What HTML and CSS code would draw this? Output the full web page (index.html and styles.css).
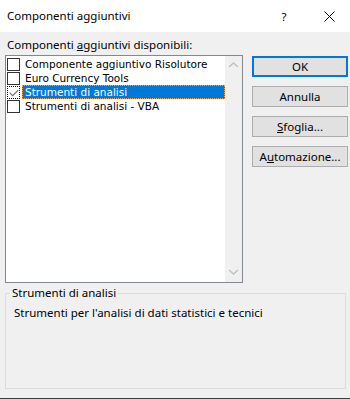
FILE: index.html
```html
<!DOCTYPE html>
<html>
	<head>
		<meta charset="utf-8" />
		<title>Componenti aggiuntivi</title>
		<link rel="stylesheet" href="styles.css">
	</head>
	<body>

<div class="dialog">
    <div class="titlebar">
        <span class="title">Componenti aggiuntivi</span>
        <span class="help">?</span>
        <span class="close">
            <svg width="11" height="11" viewBox="0 0 11 11"><path d="M0.5 0.5 L10.5 10.5 M10.5 0.5 L0.5 10.5" stroke="#000" stroke-width="1" fill="none"/></svg>
        </span>
    </div>

    <div class="content">
        <div class="caption">Componenti <u>a</u>ggiuntivi disponibili:</div>
        <div class="main">
            <div class="listbox">
                <ul class="items">
                    <li><span class="check"></span><span class="text">Componente aggiuntivo Risolutore</span></li>
                    <li><span class="check"></span><span class="text">Euro Currency Tools</span></li>
                    <li class="selected">
                        <span class="check focus">
                            <svg width="13" height="13" viewBox="0 0 13 13"><path d="M2 5.5 L5.5 9 L12 2.5" stroke="#6b6b6b" stroke-width="1.3" fill="none"/></svg>
                        </span><span class="text">Strumenti di analisi</span>
                    </li>
                    <li><span class="check"></span><span class="text">Strumenti di analisi - VBA</span></li>
                </ul>
                <div class="scrollbar">
                    <svg width="17" height="17" viewBox="0 0 17 17"><path d="M4 10 L8.5 6 L13 10" stroke="#c2c2c2" stroke-width="1.6" fill="none"/></svg>
                    <svg width="17" height="17" viewBox="0 0 17 17"><path d="M4 7 L8.5 11 L13 7" stroke="#c2c2c2" stroke-width="1.6" fill="none"/></svg>
                </div>
            </div>
            <div class="buttons">
                <div class="btn default">OK</div>
                <div class="btn">Annulla</div>
                <div class="btn"><u>S</u>foglia...</div>
                <div class="btn">A<u>u</u>tomazione...</div>
            </div>
        </div>

        <fieldset class="group">
            <legend>Strumenti di analisi</legend>
            <div class="desc">Strumenti per l'analisi di dati statistici e tecnici</div>
        </fieldset>
    </div>
    <div class="behind"></div>
</div>

	</body>
</html>
```

FILE: styles.css
```css
* {
    margin: 0;
    padding: 0;
    box-sizing: border-box;
}
body {
    width: 350px;
    height: 399px;
    overflow: hidden;
    background: #f0f0f0;
    font-family: "Noto Sans", "Open Sans", sans-serif;
    font-size: 11.5px;
    color: #000;
}
.dialog {
    display: flex;
    flex-direction: column;
    height: 399px;
}
.titlebar {
    height: 32px;
    background: #fff;
    display: flex;
    align-items: center;
}
.title {
    padding-left: 7px;
    flex: 1;
    line-height: 16px;
}
.help {
    width: 14px;
    text-align: center;
    margin-right: 33px;
}
.close {
    width: 11px;
    height: 11px;
    margin-right: 15px;
    display: flex;
}
.content {
    flex: 1;
    padding: 5px 0 0 5px;
}
.caption {
    padding-left: 2px;
    line-height: 16px;
    margin-bottom: 2px;
}
.main {
    display: flex;
}
.listbox {
    width: 238px;
    height: 228px;
    border: 1px solid #828790;
    background: #fff;
    display: flex;
}
.items {
    flex: 1;
    list-style: none;
    padding-top: 1px;
    font-family: "DejaVu Sans", sans-serif;
    font-size: 10.5px;
}
.items li {
    height: 14px;
    display: flex;
    align-items: center;
    padding-left: 1px;
}
.check {
    width: 13px;
    height: 13px;
    border: 1px solid #333;
    background: #fff;
    margin-right: 2px;
    display: flex;
}
.check.focus {
    border: 1px dotted #000;
}
.text {
    line-height: 14px;
    padding: 0 3px;
    white-space: nowrap;
}
.selected .text {
    flex: 1;
    height: 14px;
    background: #0078d7;
    color: #fff;
    outline: 1px dotted #f7a54a;
    outline-offset: -1px;
}
.scrollbar {
    width: 17px;
    background: #f0f0f0;
    display: flex;
    flex-direction: column;
    justify-content: space-between;
    padding: 1px 0 2px;
}
.buttons {
    display: flex;
    flex-direction: column;
    gap: 9px;
    margin-left: 9px;
    padding-top: 1px;
}
.btn {
    width: 96px;
    height: 21px;
    border: 1px solid #adadad;
    background: #e1e1e1;
    text-align: center;
    line-height: 19px;
}
.btn.default {
    border: 2px solid #0078d7;
    line-height: 17px;
}
.group {
    width: 341px;
    height: 103px;
    margin-top: 3px;
    border: 1px solid #dcdcdc;
    padding: 0 0 0 8px;
}
.group legend {
    margin-left: -4px;
    padding: 0 2px;
    line-height: 14px;
}
.desc {
    padding-top: 5px;
    line-height: 16px;
}
.behind {
    height: 1px;
    background: #3a3a3a;
}
```
